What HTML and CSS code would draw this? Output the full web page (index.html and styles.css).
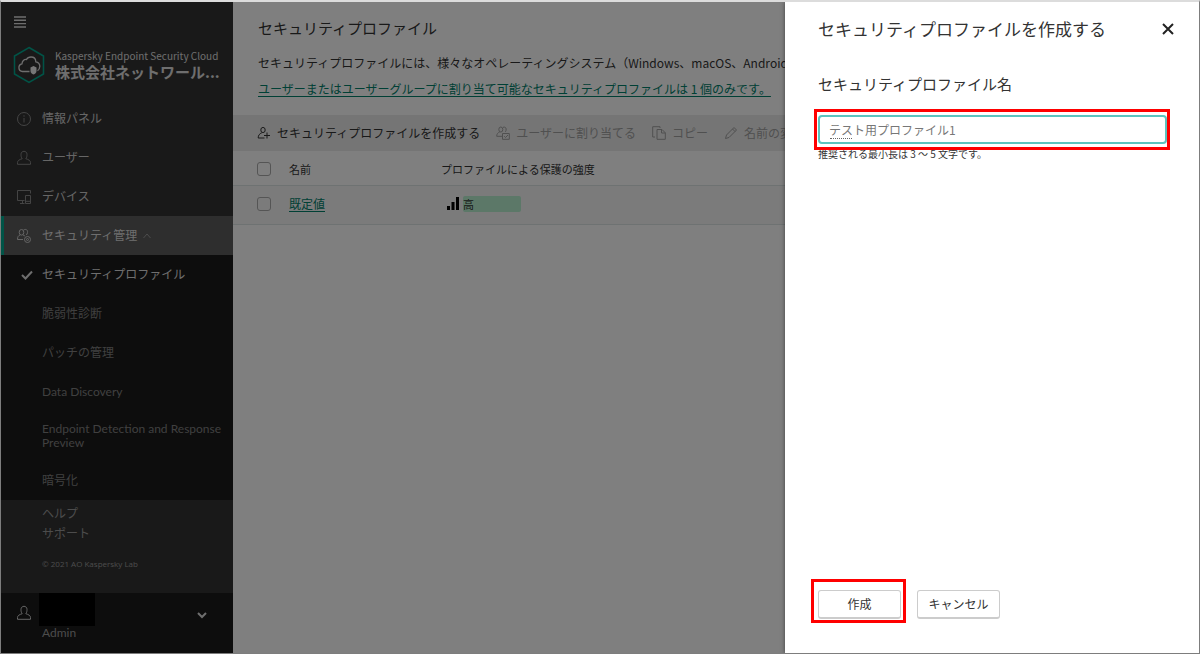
FILE: index.html
```html
<!DOCTYPE html>
<html lang="ja">
<head>
    <meta charset="UTF-8">
    <meta name="viewport" content="width=device-width, initial-scale=1.0">
    <title>セキュリティプロファイル</title>
    <link rel="stylesheet" href="styles.css">
</head>
<body>
    <div class="app">
        <aside class="sidebar">
            <div class="sidebar-header">
                <button class="menu-button" aria-label="メニュー">
                    <svg width="12" height="12" viewBox="0 0 12 12" stroke="currentColor" stroke-width="1.4"><path d="M0 1h12M0 4.3h12M0 7.6h12M0 11h12"/></svg>
                </button>
                <div class="brand">
                    <svg width="32" height="38" viewBox="0 0 32 38" fill="none">
                        <path d="M16 1.5 30.5 10v18L16 36.5 1.5 28V10z" stroke="#00a88e" stroke-width="1.5"/>
                        <path d="M16.500 25.500H9.500a3.900 3.900 0 0 1-.5-7.700c.2-3 2-4.600 4.500-4.300 1-1.800 2.600-2.500 4.500-2.500 3 0 4.700 2 4.800 4.800 2.500.4 4 2.200 4 4.500 0 2-.8 3.500-2.300 4.500" stroke="#ddd" stroke-width="1.300"/>
                        <path d="M17.500 21.500l3-1.500 3 1.500v3.500c0 2-1.500 3-3 3.500-1.500-.5-3-1.500-3-3.500z" fill="#eee"/>
                    </svg>
                    <div class="brand-text">
                        <div class="product">Kaspersky Endpoint Security Cloud</div>
                        <div class="company">株式会社ネットワール...</div>
                    </div>
                </div>
            </div>
            <nav class="nav">
                <a class="nav-item" href="#">
                    <svg class="icon" viewBox="0 0 16 16"><circle cx="8" cy="8" r="6.500"/><path d="M8 7v4.500M8 4.300v1.400"/></svg>
                    情報パネル
                </a>
                <a class="nav-item" href="#">
                    <svg class="icon" viewBox="0 0 16 16"><path d="M6.200 8.700C3.500 9.600 1.500 10.500 1.500 12.500v1.800h13v-1.800c0-2-2-2.900-4.700-3.800C10.800 7.500 11 6 11 4.500 11 2.600 9.800 1.300 8 1.300S5 2.600 5 4.500c0 1.500.2 3 1.200 4.200z"/></svg>
                    ユーザー
                </a>
                <a class="nav-item" href="#">
                    <svg class="icon" viewBox="0 0 16 16"><path d="M8.500 11.500h-7v-10h13v3M4 14.500h4.500M6.500 11.500v3M9.500 6.500h5v8h-5zM9.500 12.300h5"/></svg>
                    デバイス
                </a>
                <a class="nav-item active" href="#">
                    <svg class="icon" viewBox="0 0 16 16"><ellipse cx="5.500" cy="4.300" rx="2.300" ry="2.800"/><path d="M4.300 6.800C2.300 7.600 1.500 8.800 1.500 11.500H7M7.500 2c2.500-1.500 4.500.2 4 2.500-.2 1.200-.6 2-1.200 2.500M7 7c1 .3 1.500.6 2 1.200"/><circle cx="11.500" cy="11.500" r="3"/><circle cx="11.500" cy="11.500" r="1"/></svg>
                    セキュリティ管理
                    <svg class="caret" width="8" height="6" viewBox="0 0 8 6"><path d="M.5 5 4 1l3.500 4"/></svg>
                </a>
                <div class="subnav">
                    <a class="subnav-item current" href="#">
                        <svg class="check" width="12" height="10" viewBox="0 0 12 10"><path d="M1 5l3.500 3.500L11 1.500"/></svg>
                        セキュリティプロファイル
                    </a>
                    <a class="subnav-item" href="#">脆弱性診断</a>
                    <a class="subnav-item" href="#">パッチの管理</a>
                    <a class="subnav-item" href="#">Data Discovery</a>
                    <a class="subnav-item" href="#">Endpoint Detection and Response Preview</a>
                    <a class="subnav-item" href="#">暗号化</a>
                </div>
            </nav>
            <div class="support">
                <a href="#">ヘルプ</a>
                <a href="#">サポート</a>
                <div class="copyright">© 2021 AO Kaspersky Lab</div>
            </div>
            <button class="account">
                <svg class="icon" viewBox="0 0 16 16"><path d="M6.200 8.700C3.500 9.600 1.500 10.500 1.500 12.500v1.800h13v-1.800c0-2-2-2.900-4.700-3.800C10.800 7.500 11 6 11 4.500 11 2.600 9.800 1.300 8 1.300S5 2.600 5 4.500c0 1.500.2 3 1.200 4.200z"/></svg>
                <span class="account-info">
                    <span class="account-name"></span>
                    <span class="account-role">Admin</span>
                </span>
                <svg class="caret" width="10" height="8" viewBox="0 0 10 8"><path d="M1 2l4 4 4-4"/></svg>
            </button>
        </aside>

        <main class="main">
            <h1>セキュリティプロファイル</h1>
            <p class="lead">セキュリティプロファイルには、様々なオペレーティングシステム（Windows、macOS、Android、iOS）の設定が含まれます。</p>
            <p class="lead"><a href="#">ユーザーまたはユーザーグループに割り当て可能なセキュリティプロファイルは 1 個のみです。</a></p>
            <div class="toolbar">
                <button>
                    <svg class="icon-small" viewBox="0 0 14 14"><ellipse cx="6" cy="4" rx="2.200" ry="2.600"/><path d="M7.500 12H1.200c0-2.700 1.200-4.200 3.600-5.200M10 6.500v6M7 9.500h6"/></svg>
                    セキュリティプロファイルを作成する
                </button>
                <button disabled>
                    <svg class="icon-small" viewBox="0 0 14 14"><ellipse cx="4.800" cy="3.500" rx="2" ry="2.500"/><path d="M6 10.300H.7c0-2.300 1-3.500 3-4.300M7 1.300c2.200-.8 3.800.8 3 3.200-.2.700-.4 1-.8 1.500M6.500 7.500h6.800v5.800H6.500zM8.200 10.200l1.300 1.300L12 9"/></svg>
                    ユーザーに割り当てる
                </button>
                <button disabled>
                    <svg class="icon-small" viewBox="0 0 14 14"><path d="M3 11H.7V.7H8V2M5 3.500h5l3.300 3.300v6.500H5zM9.500 3.500V7h3.800"/></svg>
                    コピー
                </button>
                <button disabled>
                    <svg class="icon-small" viewBox="0 0 14 14"><path d="M1.500 12.500l1-3.500 7.500-7.500 2.500 2.500L5 11.500zM8.500 3l2.500 2.500"/></svg>
                    名前の変更
                </button>
            </div>
            <table class="profiles">
                <thead>
                    <tr>
                        <th class="col-check"><input type="checkbox" aria-label="すべて選択"></th>
                        <th class="col-name">名前</th>
                        <th>プロファイルによる保護の強度</th>
                    </tr>
                </thead>
                <tbody>
                    <tr>
                        <td class="col-check"><input type="checkbox" aria-label="既定値"></td>
                        <td class="col-name"><a href="#">既定値</a></td>
                        <td>
                            <div class="strength">
                                <svg width="12" height="13" viewBox="0 0 12 13"><path d="M0 9h3v4H0zM4.500 5h3v8h-3zM9 0h3v13H9z"/></svg>
                                <span class="level">高</span>
                            </div>
                        </td>
                    </tr>
                </tbody>
            </table>
        </main>

        <div class="backdrop"></div>

        <form class="panel" role="dialog" aria-labelledby="panel-title">
            <div class="panel-header">
                <h2 id="panel-title">セキュリティプロファイルを作成する</h2>
                <button type="button" class="close" aria-label="閉じる">
                    <svg width="12" height="12" viewBox="0 0 12 12"><path d="M1 1l10 10M11 1L1 11"/></svg>
                </button>
            </div>
            <label for="profile-name">セキュリティプロファイル名</label>
            <div class="field marked">
                <input type="text" id="profile-name" value="テスト用プロファイル1">
                <span class="ime-line"></span>
            </div>
            <p class="hint">推奨される最小長は 3 ～ 5 文字です。</p>
            <div class="actions">
                <div class="marked"><button type="submit">作成</button></div>
                <button type="button">キャンセル</button>
            </div>
        </form>
    </div>
</body>
</html>
```
FILE: styles.css
```css
* {
    box-sizing: border-box;
}
body {
    margin: 0;
    font-family: "Noto Sans CJK JP", sans-serif;
    font-size: 12px;
    line-height: 18px;
    color: #333;
    background: #fff;
}
button,
input {
    font: inherit;
    color: inherit;
}
button {
    padding: 0;
    border: none;
    background: none;
}
h1, h2, p {
    margin: 0;
    font-weight: normal;
}
svg {
    flex: none;
    fill: none;
}
.app {
    position: relative;
    display: flex;
    min-height: 100vh;
    overflow: hidden;
    border: 1px solid #7d7d7d;
    border-top: 2px solid #dcdcdc;
}

/* sidebar */
.sidebar {
    display: flex;
    flex-direction: column;
    flex: none;
    width: 232px;
    background: #333;
    color: #ddd;
}
.sidebar-header {
    height: 97px;
    padding: 14px 12px 0;
}
.menu-button {
    display: block;
    height: 12px;
    margin-left: 1px;
}
.menu-button svg {
    display: block;
}
.brand {
    display: flex;
    align-items: center;
    gap: 10px;
    margin-top: 18px;
}
.brand-text {
    white-space: nowrap;
}
.product {
    font-size: 10px;
    line-height: 14px;
}
.company {
    font-size: 15px;
    line-height: 18px;
    font-weight: bold;
}
.nav {
    font-family: Lato, "Noto Sans CJK JP", sans-serif;
}
.nav-item,
.subnav-item {
    display: flex;
    align-items: center;
    min-height: 39px;
    color: #ccc;
    text-decoration: none;
}
.nav-item {
    gap: 10px;
    padding-left: 15px;
}
.icon {
    width: 16px;
    height: 16px;
    stroke: #888;
}
.caret,
.check {
    stroke: currentColor;
}
.nav-item .caret {
    margin-left: -4px;
    stroke: #999;
}
.nav-item.active {
    padding-left: 12px;
    border-left: 3px solid #00a88e;
    background: #5c5c5c;
    color: #ddd;
}
.active .icon {
    stroke: #ccc;
}
.subnav {
    background: #1a1a1a;
}
.subnav-item {
    padding: 0 8px 0 41px;
    line-height: 14px;
    color: #808080;
}
.subnav-item:nth-child(5) {
    min-height: 50px;
}
.subnav-item.current {
    padding-left: 20px;
    gap: 9px;
    color: #ddd;
}
.check {
    stroke-width: 2;
}
.support {
    flex: 1;
    padding: 3px 0 0 41px;
}
.support a {
    display: block;
    line-height: 20px;
    color: #999;
    text-decoration: none;
}
.copyright {
    margin-top: 12px;
    font-family: "Open Sans", sans-serif;
    font-size: 8px;
    color: #999;
}
.account {
    display: flex;
    align-items: flex-start;
    height: 60px;
    padding-left: 15px;
    background: #1a1a1a;
    color: #999;
    text-align: left;
}
.account .icon {
    margin-top: 12px;
    stroke: #ccc;
}
.account-info {
    flex: 1;
    padding-left: 7px;
}
.account-name {
    display: block;
    width: 56px;
    height: 33px;
    background: #000;
}
.account-role {
    display: block;
    padding-left: 3px;
    line-height: 14px;
    font-family: Lato, sans-serif;
}
.account .caret {
    margin: 18px 26px 0 0;
    stroke: #ddd;
    stroke-width: 2;
}

/* profile list */
.main {
    flex: 1;
    min-width: 0;
    overflow: hidden;
    white-space: nowrap;
}
h1 {
    padding: 14px 25px 0;
    font-size: 15px;
    line-height: 24px;
}
.lead {
    padding: 0 25px;
    line-height: 26px;
}
h1 + .lead {
    margin-top: 10px;
}
.main a {
    color: #00806a;
    text-underline-offset: 2px;
}
.toolbar {
    display: flex;
    align-items: center;
    gap: 16px;
    height: 36px;
    margin-top: 13px;
    padding-left: 24px;
    background: #ebebeb;
}
.toolbar button {
    display: flex;
    align-items: center;
    gap: 6px;
}
.toolbar button:disabled {
    color: #a0a0a0;
}
.icon-small {
    width: 14px;
    height: 14px;
    stroke: currentColor;
}
.profiles {
    width: 100%;
    border-collapse: collapse;
    table-layout: fixed;
    font-size: 11px;
}
.profiles th,
.profiles td {
    height: 34px;
    padding: 2px 0 0;
    border-bottom: 1px solid #dde5e5;
    font-weight: normal;
    text-align: left;
}
.profiles td {
    height: 39px;
    padding: 0 0 2px;
    background: #f7f7f7;
    font-size: 12px;
}
.profiles .col-check {
    width: 56px;
    padding-left: 24px;
}
.profiles .col-name {
    width: 152px;
}
.profiles input {
    display: block;
    appearance: none;
    width: 14px;
    height: 14px;
    margin: 0;
    border: 1px solid #aaa;
    border-radius: 3px;
}
.strength {
    display: flex;
    align-items: center;
    gap: 4px;
    padding-left: 6px;
}
.strength svg {
    fill: #000;
}
.level {
    width: 58px;
    height: 16px;
    line-height: 16px;
    border-radius: 2px;
    background: #b8f0d0;
    font-size: 11px;
}

.backdrop {
    position: absolute;
    inset: 0;
    background: rgba(0, 0, 0, 0.5);
}

/* create profile panel */
.panel {
    position: absolute;
    top: 0;
    right: 0;
    bottom: 0;
    display: flex;
    flex-direction: column;
    width: 414px;
    padding: 13px 32px 34px 33px;
    background: #fff;
    box-shadow: 0 0 4px rgba(0, 0, 0, 0.5);
}
.panel-header {
    display: flex;
    align-items: center;
    justify-content: space-between;
    margin-right: -13px;
    height: 28px;
}
h2 {
    font-size: 17px;
    line-height: 28px;
}
.close {
    width: 24px;
    height: 24px;
}
.close svg {
    display: block;
    margin: auto;
    stroke: #222;
    stroke-width: 2;
}
.panel label {
    margin-top: 29px;
    font-size: 15px;
    line-height: 24px;
}
.marked {
    position: relative;
}
/* red callout frame */
.marked::after {
    content: "";
    position: absolute;
    inset: -11px -5px -4px -7px;
    border: 3px solid #f00;
    pointer-events: none;
}
.field.marked::after {
    inset: -6px -3px -6px -4px;
}
.field {
    margin-top: 19px;
}
.field input {
    display: block;
    width: 100%;
    height: 29px;
    padding: 0 9px;
    border: 2px solid #5cc4bf;
    border-radius: 4px;
    outline: none;
    background: #fff;
    color: #777;
}
.ime-line {
    position: absolute;
    left: 12px;
    bottom: 5px;
    width: 22px;
    border-bottom: 1px dotted #666;
}
.hint {
    margin-top: 1px;
    font-size: 10px;
}
.actions {
    display: flex;
    gap: 16px;
    margin-top: auto;
}
.actions button {
    width: 83px;
    height: 29px;
    border: 1px solid #ccc;
    border-bottom-width: 2px;
    border-radius: 3px;
    background: #fff;
}
```
